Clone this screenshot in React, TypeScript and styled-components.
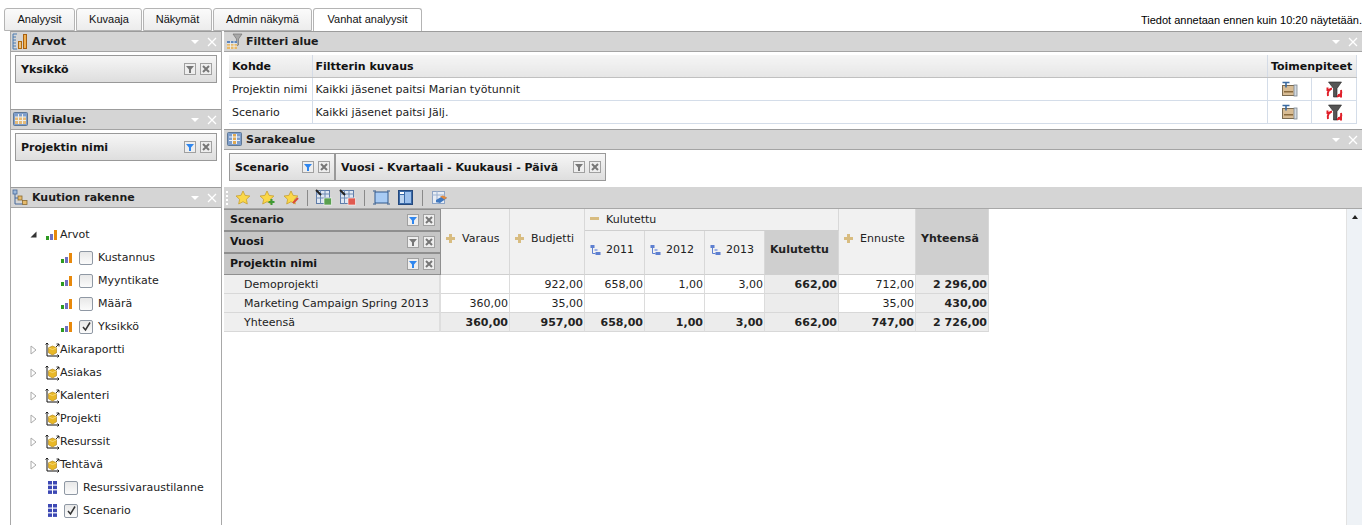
import React from "react";
import styled, { createGlobalStyle } from "styled-components";

const Global = createGlobalStyle`
  html, body { margin: 0; padding: 0; background: #fff; overflow: hidden; }
  body { font-family: "DejaVu Sans", Verdana, sans-serif; font-size: 11px; color: #111; }
`;

const Page = styled.div`
  width: 1362px;
  height: 525px;
  overflow: hidden;
  display: flex;
  flex-direction: column;
`;

const TabBar = styled.div`
  height: 23px;
  margin-top: 8px;
  display: flex;
  align-items: stretch;
  padding-left: 4px;
  font-family: "Liberation Sans", Arial, sans-serif;
  font-size: 11px;
`;

const Tab = styled.div<{ $active?: boolean; $w: number }>`
  width: ${(p) => p.$w}px;
  box-sizing: border-box;
  margin-right: 1px;
  border: 1px solid #b4b4b4;
  border-bottom: ${(p) => (p.$active ? "none" : "1px solid #b4b4b4")};
  border-radius: 3px 3px 0 0;
  background: ${(p) => (p.$active ? "#fff" : "linear-gradient(#fbfbfb, #ececec)")};
  display: flex;
  align-items: center;
  justify-content: center;
  padding-bottom: 2px;
`;

const Notice = styled.div`
  margin-left: auto;
  padding-top: 6px;
  white-space: nowrap;
  color: #000;
`;

const Main = styled.div`
  flex: 1;
  min-height: 0;
  display: grid;
  grid-template-columns: 212px 1138px;
  column-gap: 2px;
  padding-left: 10px;
`;

const Column = styled.div`
  display: flex;
  flex-direction: column;
  min-width: 0;
`;

const LeftColumn = styled(Column)`
  border-right: 1px solid #a8a8a8;
`;

const PanelHeader = styled.div`
  height: 19px;
  background: #d5d5d5;
  border-top: 1px solid #9c9c9c;
  border-bottom: 1px solid #a4a4a4;
  display: flex;
  align-items: center;
  padding-left: 2px;
  gap: 3px;
  font-weight: bold;
  flex: none;
`;

const LeftHeader = styled(PanelHeader)`
  border-left: 1px solid #a8a8a8;
  padding-left: 1px;
`;

const Title = styled.span`
  flex: 1;
  white-space: nowrap;
  color: #1c1c1c;
`;

const HeaderActions = styled.div`
  display: flex;
  align-items: center;
  gap: 7px;
  padding-right: 4px;
`;

const LeftBody = styled.div`
  height: 57px;
  padding: 3px 4px 0;
  border-left: 1px solid #a8a8a8;
  box-sizing: border-box;
  flex: none;
`;

const Chip = styled.div<{ $w?: number }>`
  box-sizing: border-box;
  height: 28px;
  width: ${(p) => (p.$w ? `${p.$w}px` : "auto")};
  border: 1px solid #999;
  background: linear-gradient(#f6f6f6, #dedede);
  display: flex;
  align-items: center;
  padding: 0 4px 0 5px;
  font-weight: bold;
  white-space: nowrap;
  color: #151515;
`;

const ChipLabel = styled.span`
  flex: 1;
`;

const MiniButtons = styled.div`
  display: flex;
  gap: 4px;
  align-items: center;
`;

const MiniBox = styled.span`
  box-sizing: border-box;
  width: 12px;
  height: 12px;
  border: 1px solid #a0a0a0;
  background: #eee;
  display: flex;
  align-items: center;
  justify-content: center;
`;

const Tree = styled.div`
  flex: 1;
  padding-top: 15px;
  border-left: 1px solid #a8a8a8;
  min-height: 0;
`;

const TreeRow = styled.div<{ $indent: number }>`
  height: 23px;
  display: flex;
  align-items: center;
  padding-left: ${(p) => p.$indent}px;
  color: #222;
  white-space: nowrap;
`;

const Expander = styled.span`
  width: 15px;
  display: flex;
  align-items: center;
  flex: none;
`;

const Gap = styled.span<{ $w: number }>`
  width: ${(p) => p.$w}px;
  flex: none;
`;

const Check = styled.span`
  box-sizing: border-box;
  width: 14px;
  height: 14px;
  border: 1px solid #8f98a4;
  border-radius: 2px;
  background: linear-gradient(#e8e8e8, #fbfbfb);
  margin: 0 5px 0 7px;
  display: flex;
  align-items: center;
  justify-content: center;
  flex: none;
`;

const FilterBody = styled.div`
  height: 77px;
  box-sizing: border-box;
  padding: 3px 5px 0;
  flex: none;
`;

const FilterTable = styled.table`
  width: 1128px;
  table-layout: fixed;
  border-collapse: collapse;
  th {
    height: 22px;
    padding: 0 0 0 3px;
    text-align: left;
    font-weight: bold;
    background: linear-gradient(#f5f5f5, #e6e6e6);
    border-right: 1px solid #d4dbe6;
    border-bottom: 1px solid #c0c0c0;
    white-space: nowrap;
    overflow: hidden;
  }
  td {
    height: 22px;
    padding: 0 0 0 3px;
    border-right: 1px solid #d4dde9;
    border-bottom: 1px solid #d4dde9;
    white-space: nowrap;
    overflow: hidden;
    color: #222;
  }
  td.act { padding: 0; text-align: center; }
  td svg { display: block; margin: 0 auto; }
`;

const ColumnBody = styled.div`
  height: 36px;
  box-sizing: border-box;
  display: flex;
  padding: 3px 5px 0;
  flex: none;
`;

const Toolbar = styled.div`
  height: 22px;
  flex: none;
  margin-top: 1px;
  background: #d5d5d5;
  border-bottom: 1px solid #a8a8a8;
  box-sizing: border-box;
  display: flex;
  align-items: center;
  padding-left: 2px;
  gap: 7px;
`;

const Grip = styled.span`
  width: 2px;
  height: 14px;
  background: repeating-linear-gradient(#fff 0 2px, transparent 2px 4px);
`;

const Sep = styled.span<{ $nudge?: boolean }>`
  width: 1px;
  height: 16px;
  background: #8a8a8a;
  margin: 0 ${(p) => (p.$nudge ? "1px" : "0")};
`;

const GridArea = styled.div`
  flex: 1;
  min-height: 0;
  display: flex;
`;

const GridScroll = styled.div`
  flex: 1;
`;

const Pivot = styled.table`
  table-layout: fixed;
  border-collapse: separate;
  border-spacing: 0;
  width: 765px;
`;

const FieldCell = styled.th`
  height: 20px;
  padding: 0;
  background: #c6c6c6;
  border: 1px solid #8f8f8f;
  border-left: 0;
  font-weight: bold;
  text-align: left;
  color: #151515;
`;

const FieldInner = styled.div`
  display: flex;
  align-items: center;
  padding: 0 5px 0 6px;
  justify-content: space-between;
`;

const FieldLabel = styled.span`
  margin-bottom: 2px;
`;

const HeadCell = styled.th<{ $total?: boolean; $bold?: boolean }>`
  padding: 0 0 6px 5px;
  background: ${(p) => (p.$total ? "#cfcfcf" : "#f1f1f1")};
  border-right: 1px solid #d8d8d8;
  border-bottom: 1px solid #cfcfcf;
  font-weight: ${(p) => (p.$bold ? "bold" : "normal")};
  text-align: left;
  color: #222;
  white-space: nowrap;
`;

const HeadInner = styled.div<{ $gap: number }>`
  display: flex;
  align-items: center;
  gap: ${(p) => p.$gap}px;
`;

const RowLabel = styled.td`
  height: 18px;
  padding: 0 0 0 20px;
  background: #efefef;
  border-right: 2px solid #dedede;
  border-bottom: 1px solid #d8d8d8;
  color: #222;
  white-space: nowrap;
`;

const Num = styled.td<{ $bold?: boolean; $shade?: boolean }>`
  height: 18px;
  padding: 0 1px 0 0;
  text-align: right;
  background: ${(p) => (p.$shade ? "#ececec" : "#fff")};
  border-right: 1px solid #dcdcdc;
  border-bottom: 1px solid #d8d8d8;
  font-weight: ${(p) => (p.$bold ? "bold" : "normal")};
  color: #222;
  white-space: nowrap;
`;

const ScrollTrack = styled.div`
  width: 16px;
  flex: none;
  background: #eef2f6;
  border-left: 1px solid #e2e2e2;
  box-sizing: border-box;
  display: flex;
  justify-content: center;
  padding-top: 6px;
`;

const ScrollUp = styled.span`
  width: 0;
  height: 0;
  border-left: 3px solid transparent;
  border-right: 3px solid transparent;
  border-bottom: 4px solid #222;
`;

/* ---------- icons ---------- */

const HeadBtns = () => (
  <HeaderActions>
    <svg width="10" height="6" viewBox="0 0 10 6"><path d="M1 1h8L5 5z" fill="#fff" /></svg>
    <svg width="10" height="10" viewBox="0 0 10 10"><path d="M1 1l8 8M9 1l-8 8" stroke="#fff" strokeWidth="1.3" /></svg>
  </HeaderActions>
);

const Funnel = ({ on }: { on?: boolean }) => (
  <MiniBox>
    <svg width="8" height="7" viewBox="0 0 8 7"><path d="M0 0h8L5 3.5V7H3V3.5z" fill={on ? "#2f86ee" : "#777"} /></svg>
  </MiniBox>
);

const Cross = () => (
  <MiniBox>
    <svg width="8" height="8" viewBox="0 0 8 8"><path d="M1 1l6 6M7 1l-6 6" stroke="#777" strokeWidth="2" /></svg>
  </MiniBox>
);

const Btns = ({ on }: { on?: boolean }) => (
  <MiniButtons>
    <Funnel on={on} />
    <Cross />
  </MiniButtons>
);

const ValuesIcon = () => (
  <svg width="17" height="17" viewBox="0 0 17 17">
    <path d="M1 1h4M1 1v15h4M1 4h3M1 7h3M1 10h3M1 13h3" stroke="#4a7ab0" fill="none" />
    <rect x="6.5" y="8.5" width="3" height="7" fill="#f0c27a" stroke="#b06a10" />
    <rect x="11.5" y="1.5" width="3" height="14" fill="#f0b050" stroke="#a86010" />
  </svg>
);

const GridIcon = () => (
  <svg width="17" height="15" viewBox="-1 0 17 15">
    <rect x="0.5" y="0.5" width="14" height="13" rx="1" fill="#7f9fcc" stroke="#5f7896" />
    <rect x="2" y="5" width="11" height="7" fill="#e6bb78" />
    <path d="M5.5 2v10M9.5 2v10M2 5h11M2 8.5h11" stroke="#f0f0ea" />
  </svg>
);

const ColGridIcon = () => (
  <svg width="17" height="15" viewBox="-1 0 17 15">
    <rect x="0.5" y="0.5" width="14" height="13" rx="1" fill="#7f9fcc" stroke="#5f7896" />
    <rect x="5.5" y="2" width="4" height="10" fill="#e0a850" />
    <path d="M5.5 2v10M9.5 2v10M2 5h11M2 8.5h11" stroke="#eef2f8" />
  </svg>
);

const FilterAreaIcon = () => (
  <svg width="17" height="17" viewBox="0 0 17 17">
    <path d="M7 1h9l-3.5 5v6l-2 1V6z" fill="#a8a8a8" stroke="#6a6a6a" strokeWidth="0.6" />
    <rect x="1" y="8" width="10" height="8" fill="#e8b868" />
    <rect x="1" y="8" width="10" height="2.5" fill="#5f86bc" />
    <path d="M4.5 8v8M8 8v8M1 10.5h10M1 13.2h10" stroke="#eef2f8" strokeWidth="0.8" />
  </svg>
);

const CubeTreeIcon = () => (
  <svg width="17" height="17" viewBox="0 0 17 17">
    <rect x="1" y="1" width="4" height="4" fill="#9cb8dc" stroke="#47699a" strokeWidth="0.8" />
    <rect x="6" y="7" width="4" height="4" fill="#e6bb6c" stroke="#8a6a30" strokeWidth="0.8" />
    <rect x="10.5" y="11.5" width="4.5" height="4" fill="#e6bb6c" stroke="#8a6a30" strokeWidth="0.8" />
    <path d="M3 5v10h7.5M3 9h3" stroke="#47699a" fill="none" />
  </svg>
);

const MeasureIcon = () => (
  <svg width="11" height="10" viewBox="0 0 11 10">
    <rect x="0" y="6" width="3" height="4" fill="#2e9a22" />
    <rect x="4" y="4" width="3" height="6" fill="#6f6fc0" />
    <rect x="8" y="0" width="3" height="10" fill="#e8890c" />
  </svg>
);

const DimIcon = () => (
  <svg width="15" height="16" viewBox="0 0 15 16">
    <path d="M2 1v13h12" stroke="#111" fill="none" />
    <path d="M0.5 2.5L2 1l1.5 1.5M12.5 12.5L14 14l-1.5 1.5M11 5l3-3M11.5 2H14v2.5" stroke="#111" strokeWidth="0.9" fill="none" />
    <path d="M7.5 4l4 1.8v5l-4 2.2-4-2.2v-5z" fill="#e9b826" stroke="#a87c10" strokeWidth="0.6" />
    <path d="M3.5 5.8l4 1.8 4-1.8" fill="none" stroke="#f7e08a" strokeWidth="0.8" />
  </svg>
);

const HierIcon = () => (
  <svg width="9" height="13" viewBox="0 0 9 13">
    <g fill="#3c48b4">
      <rect x="0" y="0" width="4" height="3.5" /><rect x="5" y="0" width="4" height="3.5" />
      <rect x="0" y="4.7" width="4" height="3.5" /><rect x="5" y="4.7" width="4" height="3.5" />
      <rect x="0" y="9.4" width="4" height="3.5" /><rect x="5" y="9.4" width="4" height="3.5" />
    </g>
  </svg>
);

const Open = () => (
  <svg width="7" height="7" viewBox="0 0 7 7"><path d="M6.5 0.5v6h-6z" fill="#333" /></svg>
);

const Closed = () => (
  <svg width="7" height="10" viewBox="0 0 7 10"><path d="M1 1l5 4-5 4z" fill="#fff" stroke="#aaa" /></svg>
);

const Tick = () => (
  <svg width="11" height="11" viewBox="0 0 11 11"><path d="M2 6l2.5 3L9 1.5" stroke="#333" strokeWidth="1.5" fill="none" /></svg>
);

const Star = ({ badge }: { badge?: "plus" | "pen" }) => (
  <svg width="17" height="16" viewBox="0 0 17 16">
    <path d="M8 1l2.1 4.4 4.8.6-3.5 3.3.9 4.7L8 11.7 3.7 14l.9-4.7L1 6l4.9-.6z" fill="#fbd848" stroke="#c8a030" strokeWidth="0.8" />
    {badge === "plus" && <path d="M12.5 9v6M9.5 12h6" stroke="#3e9a35" strokeWidth="2" />}
    {badge === "pen" && <path d="M10 13l5-5" stroke="#d94a3a" strokeWidth="2" />}
  </svg>
);

const SheetIcon = ({ badge }: { badge: string }) => (
  <svg width="17" height="17" viewBox="0 0 17 17">
    <rect x="1.5" y="1.5" width="13" height="13" fill="#dfe7f2" stroke="#5d7ba8" />
    <path d="M1 5h14M5.5 1v14M10 1v14M1 9h14" stroke="#6d8ab4" />
    <path d="M1 1l5 5" stroke="#222" strokeWidth="2" />
    <rect x="9" y="9" width="7.5" height="7" fill={badge} stroke="#fff" strokeWidth="0.6" />
  </svg>
);

const FrameIcon = () => (
  <svg width="17" height="15" viewBox="0 0 17 15">
    <rect x="2" y="2" width="13" height="11" fill="#a8cbf4" stroke="#30588c" />
    <path d="M0 1h3M14 1h3M0 14h3M14 14h3" stroke="#30588c" />
  </svg>
);

const LayoutIcon = () => (
  <svg width="17" height="15" viewBox="-1 0 17 15">
    <rect x="0.5" y="0.5" width="14" height="14" fill="#3a6aa8" stroke="#24487c" />
    <rect x="2" y="2" width="4" height="2" fill="#fff" />
    <rect x="2" y="5" width="4" height="8" fill="#bcd4f0" />
    <rect x="7" y="2" width="6" height="11" fill="#9cc0ec" />
  </svg>
);

const EraseIcon = () => (
  <svg width="17" height="16" viewBox="0 0 17 16">
    <rect x="1.5" y="1.5" width="12" height="12" fill="#e8edf4" stroke="#8ea4c4" />
    <path d="M1 5h13M6 1v13" stroke="#9db2d0" />
    <path d="M5 10l7-4 4 2-7 5-4-1z" fill="#3f78c0" />
    <path d="M9 6.5l3-1 4 2-2.5 2z" fill="#e08a40" />
  </svg>
);

const TreeSmall = () => (
  <svg width="11" height="12" viewBox="0 0 11 12">
    <rect x="0.5" y="1" width="4" height="3" fill="#5d7fd0" />
    <rect x="5.5" y="8" width="5" height="3" fill="#5d7fd0" />
    <path d="M2.5 4v5.5h3" stroke="#5d7fd0" fill="none" />
    <rect x="4.5" y="5" width="3" height="2" fill="#9db2e6" />
  </svg>
);

const PlusIcon = () => (
  <svg width="9" height="9" viewBox="0 0 9 9"><path d="M3 0h3v3h3v3H6v3H3V6H0V3h3z" fill="#d8bc80" /></svg>
);

const MinusIcon = () => (
  <svg width="9" height="9" viewBox="0 0 9 9"><rect y="2" width="9" height="3" fill="#d8bc80" /></svg>
);

const FolderAct = () => (
  <svg width="17" height="17" viewBox="0 0 17 17">
    <rect x="1.5" y="4.5" width="12" height="10" fill="#d8bc94" stroke="#7a6a50" />
    <rect x="3" y="10" width="9" height="1.5" fill="#8a6a3c" />
    <rect x="13" y="4" width="3" height="11" fill="#d4dbe2" stroke="#7a8590" strokeWidth="0.8" />
    <path d="M1.5 1.5h7M5 1.5v5" stroke="#3a6aa0" strokeWidth="1.6" />
  </svg>
);

const ClearAct = () => (
  <svg width="17" height="17" viewBox="0 0 17 17">
    <path d="M2.5 1h13L11 7.5V16H7.5V7.5z" fill="#555" stroke="#222" strokeWidth="0.6" />
    <path d="M2 15c-1-4 1-7 4-7.5M1.5 6.5v2.5h3" stroke="#e0202a" strokeWidth="2" fill="none" />
    <path d="M15 9c1 3.500-1 6-4 6.500M15 16.500V14h-3" stroke="#e0202a" strokeWidth="2" fill="none" />
  </svg>
);

/* ---------- data ---------- */

const tabs: [string, number][] = [
  ["Analyysit", 71],
  ["Kuvaaja", 66],
  ["Näkymät", 69],
  ["Admin näkymä", 99],
];

const measures = ["Kustannus", "Myyntikate", "Määrä", "Yksikkö"];
const dims = ["Aikaraportti", "Asiakas", "Kalenteri", "Projekti", "Resurssit", "Tehtävä"];

const rows = [
  ["Demoprojekti", "", "922,00", "658,00", "1,00", "3,00", "662,00", "712,00", "2 296,00"],
  ["Marketing Campaign Spring 2013", "360,00", "35,00", "", "", "", "", "35,00", "430,00"],
];
const total = ["Yhteensä", "360,00", "957,00", "658,00", "1,00", "3,00", "662,00", "747,00", "2 726,00"];

export default function App() {
  return (
    <Page>
      <Global />
      <TabBar>
        {tabs.map(([t, w]) => (
          <Tab key={t} $w={w}>{t}</Tab>
        ))}
        <Tab $active $w={109}>Vanhat analyysit</Tab>
        <Notice>Tiedot annetaan ennen kuin 10:20 näytetään.</Notice>
      </TabBar>
      <Main>
        <LeftColumn>
          <LeftHeader><ValuesIcon /><Title>Arvot</Title><HeadBtns /></LeftHeader>
          <LeftBody>
            <Chip><ChipLabel>Yksikkö</ChipLabel><Btns /></Chip>
          </LeftBody>
          <LeftHeader><GridIcon /><Title>Rivialue:</Title><HeadBtns /></LeftHeader>
          <LeftBody>
            <Chip><ChipLabel>Projektin nimi</ChipLabel><Btns on /></Chip>
          </LeftBody>
          <LeftHeader><CubeTreeIcon /><Title>Kuution rakenne</Title><HeadBtns /></LeftHeader>
          <Tree>
            <TreeRow $indent={19}>
              <Expander><Open /></Expander>
              <Gap $w={1} />
              <MeasureIcon />
              <Gap $w={3} />
              Arvot
            </TreeRow>
            {measures.map((m, i) => (
              <TreeRow key={m} $indent={50}>
                <MeasureIcon />
                <Check>{i === 3 && <Tick />}</Check>
                {m}
              </TreeRow>
            ))}
            {dims.map((d) => (
              <TreeRow key={d} $indent={19}>
                <Expander><Closed /></Expander>
                <DimIcon />
                {d}
              </TreeRow>
            ))}
            {["Resurssivaraustilanne", "Scenario"].map((n, i) => (
              <TreeRow key={n} $indent={37}>
                <HierIcon />
                <Check>{i === 1 && <Tick />}</Check>
                {n}
              </TreeRow>
            ))}
          </Tree>
        </LeftColumn>
        <Column>
          <PanelHeader><FilterAreaIcon /><Title>Filtteri alue</Title><HeadBtns /></PanelHeader>
          <FilterBody>
            <FilterTable>
              <colgroup>
                <col style={{ width: 83 }} />
                <col />
                <col style={{ width: 44 }} />
                <col style={{ width: 45 }} />
              </colgroup>
              <thead>
                <tr>
                  <th>Kohde</th>
                  <th>Filtterin kuvaus</th>
                  <th colSpan={2}>Toimenpiteet</th>
                </tr>
              </thead>
              <tbody>
                <tr>
                  <td>Projektin nimi</td>
                  <td>Kaikki jäsenet paitsi Marian työtunnit</td>
                  <td className="act"><FolderAct /></td>
                  <td className="act"><ClearAct /></td>
                </tr>
                <tr>
                  <td>Scenario</td>
                  <td>Kaikki jäsenet paitsi Jälj.</td>
                  <td className="act"><FolderAct /></td>
                  <td className="act"><ClearAct /></td>
                </tr>
              </tbody>
            </FilterTable>
          </FilterBody>
          <PanelHeader><ColGridIcon /><Title>Sarakealue</Title><HeadBtns /></PanelHeader>
          <ColumnBody>
            <Chip $w={106}><ChipLabel>Scenario</ChipLabel><Btns on /></Chip>
            <Chip $w={271}><ChipLabel>Vuosi - Kvartaali - Kuukausi - Päivä</ChipLabel><Btns /></Chip>
          </ColumnBody>
          <Toolbar>
            <Grip />
            <Star />
            <Star badge="plus" />
            <Star badge="pen" />
            <Sep />
            <SheetIcon badge="#5aa050" />
            <SheetIcon badge="#e05a50" />
            <Sep $nudge />
            <FrameIcon />
            <LayoutIcon />
            <Sep $nudge />
            <EraseIcon />
          </Toolbar>
          <GridArea>
            <GridScroll>
              <Pivot>
                <colgroup>
                  <col style={{ width: 217 }} />
                  <col style={{ width: 69 }} />
                  <col style={{ width: 75 }} />
                  <col style={{ width: 60 }} />
                  <col style={{ width: 60 }} />
                  <col style={{ width: 60 }} />
                  <col style={{ width: 74 }} />
                  <col style={{ width: 77 }} />
                  <col style={{ width: 73 }} />
                </colgroup>
                <thead>
                  <tr>
                    <FieldCell><FieldInner><FieldLabel>Scenario</FieldLabel><Btns on /></FieldInner></FieldCell>
                    <HeadCell rowSpan={3}><HeadInner $gap={7}><PlusIcon />Varaus</HeadInner></HeadCell>
                    <HeadCell rowSpan={3}><HeadInner $gap={7}><PlusIcon />Budjetti</HeadInner></HeadCell>
                    <HeadCell colSpan={4} style={{ paddingBottom: 0 }}><HeadInner $gap={7}><MinusIcon />Kulutettu</HeadInner></HeadCell>
                    <HeadCell rowSpan={3}><HeadInner $gap={7}><PlusIcon />Ennuste</HeadInner></HeadCell>
                    <HeadCell rowSpan={3} $total $bold>Yhteensä</HeadCell>
                  </tr>
                  <tr>
                    <FieldCell><FieldInner><FieldLabel>Vuosi</FieldLabel><Btns /></FieldInner></FieldCell>
                    <HeadCell rowSpan={2}><HeadInner $gap={5}><TreeSmall />2011</HeadInner></HeadCell>
                    <HeadCell rowSpan={2}><HeadInner $gap={5}><TreeSmall />2012</HeadInner></HeadCell>
                    <HeadCell rowSpan={2}><HeadInner $gap={5}><TreeSmall />2013</HeadInner></HeadCell>
                    <HeadCell rowSpan={2} $total $bold>Kulutettu</HeadCell>
                  </tr>
                  <tr>
                    <FieldCell><FieldInner><FieldLabel>Projektin nimi</FieldLabel><Btns on /></FieldInner></FieldCell>
                  </tr>
                </thead>
                <tbody>
                  {rows.map((r) => (
                    <tr key={r[0]}>
                      <RowLabel>{r[0]}</RowLabel>
                      {r.slice(1).map((v, i) => (
                        <Num key={i} $bold={i === 5 || i === 7} $shade={i === 5 || i === 7}>{v}</Num>
                      ))}
                    </tr>
                  ))}
                  <tr>
                    <RowLabel>{total[0]}</RowLabel>
                    {total.slice(1).map((v, i) => (
                      <Num key={i} $bold $shade>{v}</Num>
                    ))}
                  </tr>
                </tbody>
              </Pivot>
            </GridScroll>
            <ScrollTrack><ScrollUp /></ScrollTrack>
          </GridArea>
        </Column>
      </Main>
    </Page>
  );
}
